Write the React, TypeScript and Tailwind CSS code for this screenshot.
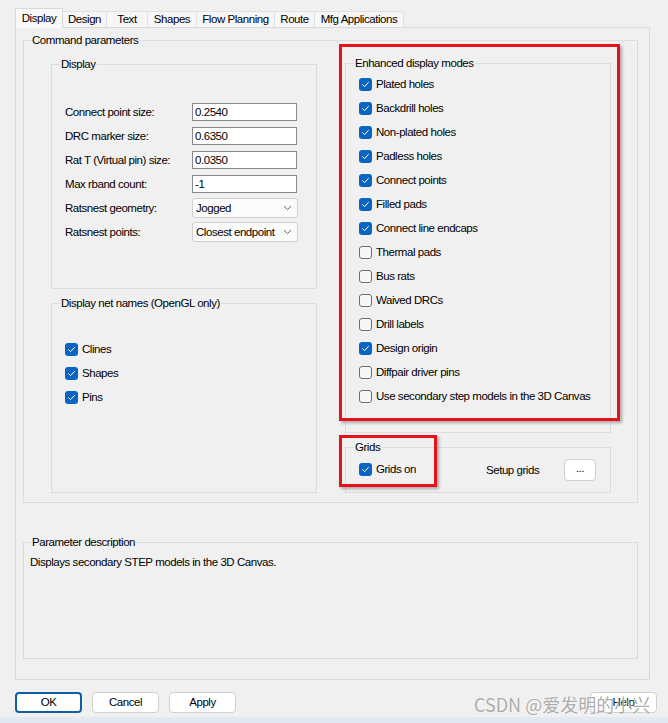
import React from "react";

function Check({ checked }: { checked: boolean }) {
  return checked ? (
    <span className="w-[13px] h-[13px] rounded-[3px] bg-[#0a64c2] flex items-center justify-center shrink-0">
      <svg width="9" height="9" viewBox="0 0 9 9">
        <path d="M1.6 4.7 L3.6 6.6 L7.4 2.5" stroke="#ffffff" strokeWidth="1" fill="none" strokeLinecap="round" strokeLinejoin="round" />
      </svg>
    </span>
  ) : (
    <span className="w-[13px] h-[13px] rounded-[3px] border border-[#6e6e6e] bg-[#f7f7f7] shrink-0" />
  );
}

function CheckRow({ label, checked }: { label: string; checked: boolean }) {
  return (
    <div className="h-[24px] flex items-center gap-[4px]">
      <Check checked={checked} />
      <span>{label}</span>
    </div>
  );
}

function Chevron() {
  return (
    <svg width="9" height="6" viewBox="0 0 9 6">
      <path d="M1 1.2 L4.5 4.6 L8 1.2" stroke="#606060" strokeWidth="1" fill="none" />
    </svg>
  );
}

function FieldRow({ label, value }: { label: string; value: string }) {
  return (
    <div className="h-[24px] flex items-center">
      <span className="w-[127px]">{label}</span>
      <input
        readOnly
        value={value}
        className="w-[105px] h-[18px] border border-[#8a8a8a] bg-white pl-[2px] outline-none"
      />
    </div>
  );
}

function SelectRow({ label, value }: { label: string; value: string }) {
  return (
    <div className="h-[24px] flex items-center">
      <span className="w-[127px]">{label}</span>
      <div className="w-[106px] h-[20px] border border-[#cfcfcf] rounded-[3px] bg-[#fbfbfb] flex items-center pl-[3px] pr-[5px]">
        <span className="flex-1">{value}</span>
        <Chevron />
      </div>
    </div>
  );
}

const tabs: { label: string; w: string }[] = [
  { label: "Design", w: "w-[44px]" },
  { label: "Text", w: "w-[41px]" },
  { label: "Shapes", w: "w-[49px]" },
  { label: "Flow Planning", w: "w-[78px]" },
  { label: "Route", w: "w-[40px]" },
  { label: "Mfg Applications", w: "w-[89px]" },
];

const modes: [string, boolean][] = [
  ["Plated holes", true],
  ["Backdrill holes", true],
  ["Non-plated holes", true],
  ["Padless holes", true],
  ["Connect points", true],
  ["Filled pads", true],
  ["Connect line endcaps", true],
  ["Thermal pads", false],
  ["Bus rats", false],
  ["Waived DRCs", false],
  ["Drill labels", false],
  ["Design origin", true],
  ["Diffpair driver pins", false],
  ["Use secondary step models in the 3D Canvas", false],
];

export default function App() {
  return (
    <div className="w-[668px] h-[723px] bg-[#f0f0f0] relative overflow-hidden text-black text-[11.5px] leading-[15px] tracking-[-0.45px] whitespace-nowrap font-['Liberation_Sans',Arial,sans-serif]">
      {/* Tab strip */}
      <div className="flex items-end pl-[15px] pt-[8px] h-[27px]">
        <div className="w-[48px] h-[20px] -mb-px relative z-10 bg-[#f9f9f9] border-l border-t border-r border-[#d9d9d9] flex items-center justify-center">
          Display
        </div>
        {tabs.map((t) => (
          <div
            key={t.label}
            className={`${t.w} h-[16px] bg-[#f6f6f6] border-t border-r border-[#e1e1e1] flex items-center justify-center`}
          >
            {t.label}
          </div>
        ))}
      </div>

      {/* Tab page */}
      <div className="ml-[15px] w-[635px] h-[653px] border border-[#d9d9d9] pl-[7px] pt-[5px]">
        <fieldset className="w-[615px] border border-[#dcdcdc]">
          <legend className="ml-[7px] px-[1px]">Command parameters</legend>
          <div className="flex pl-[27px] gap-[28px] pt-[9px] pb-[9px]">
            {/* Left column */}
            <div className="w-[266px] flex flex-col">
              <fieldset className="border border-[#dcdcdc]">
                <legend className="ml-[8px] px-[1px]">Display</legend>
                <div className="pt-[28px] pb-[44px] pl-[13px]">
                  <FieldRow label="Connect point size:" value="0.2540" />
                  <FieldRow label="DRC marker size:" value="0.6350" />
                  <FieldRow label="Rat T (Virtual pin) size:" value="0.0350" />
                  <FieldRow label="Max rband count:" value="-1" />
                  <SelectRow label="Ratsnest geometry:" value="Jogged" />
                  <SelectRow label="Ratsnest points:" value="Closest endpoint" />
                </div>
              </fieldset>
              <fieldset className="mt-[7px] border border-[#dcdcdc]">
                <legend className="ml-[8px] px-[1px]">Display net names (OpenGL only)</legend>
                <div className="pt-[26px] pb-[83px] pl-[13px]">
                  <CheckRow label="Clines" checked />
                  <CheckRow label="Shapes" checked />
                  <CheckRow label="Pins" checked />
                </div>
              </fieldset>
            </div>

            {/* Right column */}
            <div className="w-[266px] flex flex-col -mt-px">
              <fieldset className="border border-[#dcdcdc]">
                <legend className="ml-[8px] px-[1px]">Enhanced display modes</legend>
                <div className="pt-[1px] pb-[24px] pl-[13px]">
                  {modes.map(([l, c]) => (
                    <CheckRow key={l} label={l} checked={c} />
                  ))}
                </div>
              </fieldset>
              <fieldset className="mt-[7px] border border-[#dcdcdc]">
                <legend className="ml-[8px] px-[1px]">Grids</legend>
                <div className="pt-[4px] pb-[11px] pl-[13px] pr-[14px]">
                  <div className="h-[22px] flex items-center">
                    <div className="w-[127px] flex items-center gap-[4px] -mt-[2px]">
                      <Check checked />
                      <span>Grids on</span>
                    </div>
                    <span>Setup grids</span>
                    <button className="ml-auto w-[32px] h-[22px] bg-white border border-[#d0d0d0] rounded-[4px] flex items-center justify-center pb-[4px]">
                      ...
                    </button>
                  </div>
                </div>
              </fieldset>
            </div>
          </div>
        </fieldset>

        <fieldset className="mt-[32px] w-[615px] border border-[#dcdcdc]">
          <legend className="ml-[7px] px-[1px]">Parameter description</legend>
          <div className="pt-[5px] pb-[88px] pl-[6px]">Displays secondary STEP models in the 3D Canvas.</div>
        </fieldset>
      </div>

      {/* Buttons */}
      <div className="flex items-center gap-[10px] pl-[15px] pr-[11px] mt-[12px] h-[21px]">
        <button className="w-[67px] h-[21px] bg-white border-2 border-[#0f5ea8] rounded-[4px] flex items-center justify-center">
          OK
        </button>
        <button className="w-[67px] h-[21px] bg-white border border-[#d0d0d0] rounded-[4px] flex items-center justify-center">
          Cancel
        </button>
        <button className="w-[67px] h-[21px] bg-white border border-[#d0d0d0] rounded-[4px] flex items-center justify-center">
          Apply
        </button>
        <button className="ml-auto w-[67px] h-[21px] bg-white border border-[#d0d0d0] rounded-[4px] flex items-center justify-center">
          Help
        </button>
      </div>
      <div className="mt-[4px] h-[6px] bg-[#e4e9f1]" />

      {/* Annotation overlays */}
      <div className="absolute left-[339px] top-[44px] w-[281px] h-[377px] border-[3px] border-[#e5121a] shadow-[2px_2px_3px_rgba(0,0,0,0.3)] pointer-events-none" />
      <div className="absolute left-[339px] top-[435px] w-[98px] h-[52px] border-[3px] border-[#e5121a] shadow-[2px_2px_3px_rgba(0,0,0,0.3)] pointer-events-none" />

      {/* Watermark */}
      <div className="absolute left-[474px] top-[692px] text-[18px] leading-[24px] tracking-normal text-[#a3a3a3]/90 font-['Noto_Sans_CJK_SC',sans-serif] pointer-events-none [text-shadow:0_0_2px_rgba(255,255,255,0.9)]">
        CSDN @爱发明的小兴
      </div>
    </div>
  );
}
